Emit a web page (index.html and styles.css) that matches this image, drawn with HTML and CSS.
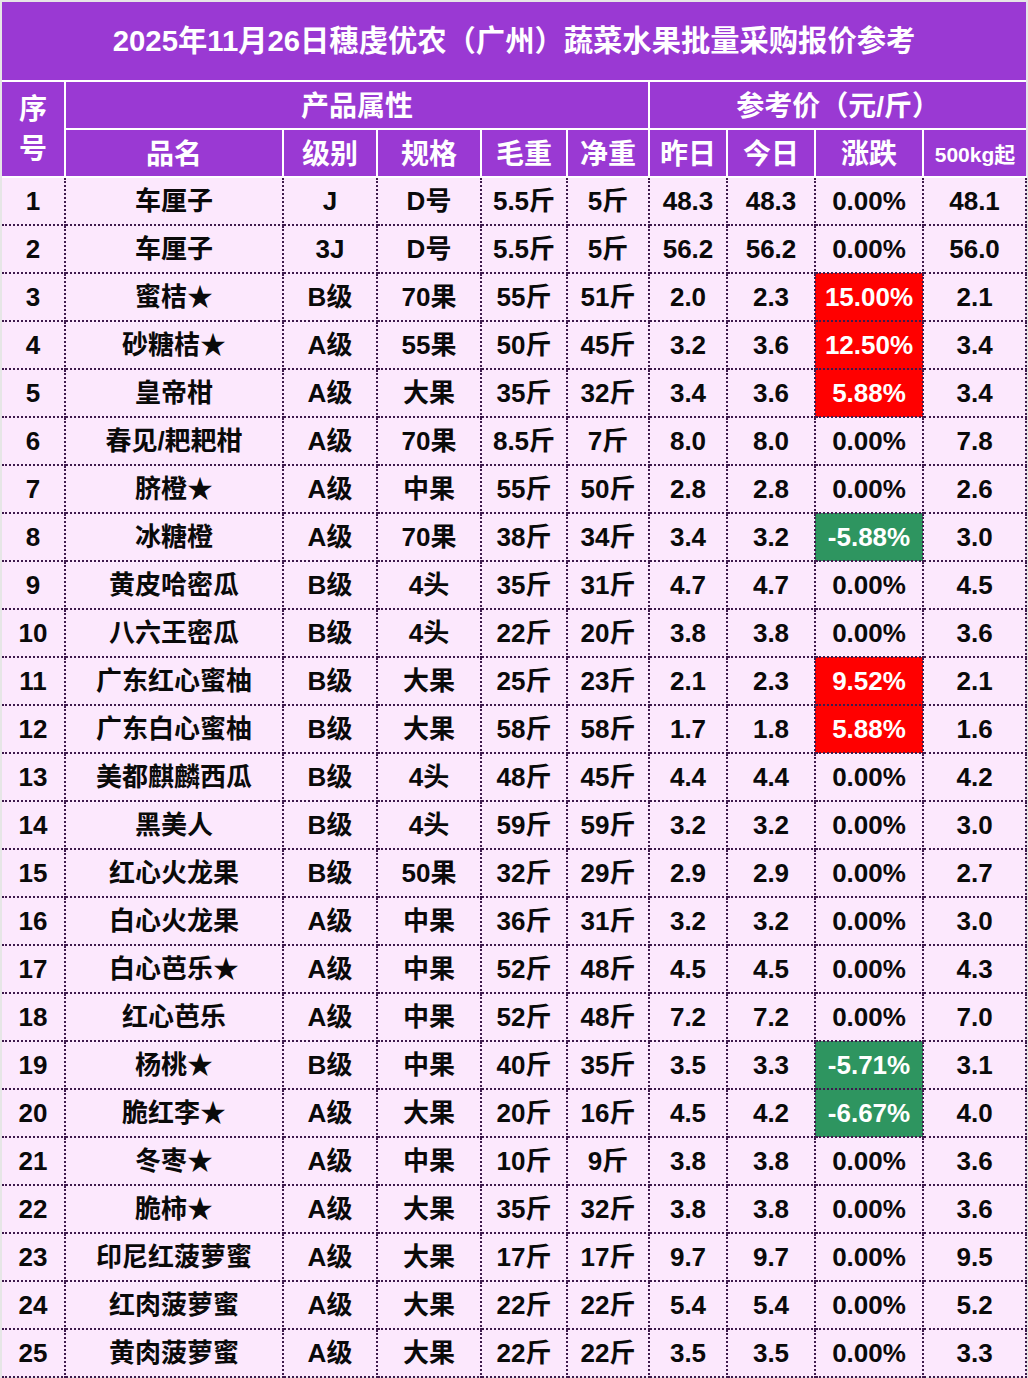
FILE: index.html
```html
<!DOCTYPE html>
<html lang="zh-CN">
<head>
<meta charset="utf-8">
<title>报价参考</title>
<link rel="stylesheet" href="styles.css">
</head>
<body>
<table class="sheet">
  <colgroup>
    <col class="c-no"><col class="c-name"><col class="c-grade"><col class="c-spec"><col class="c-gross"><col class="c-net"><col class="c-yest"><col class="c-today"><col class="c-chg"><col class="c-bulk">
  </colgroup>
  <thead>
    <tr class="title-row"><th colspan="10">2025年11月26日穗虔优农（广州）蔬菜水果批量采购报价参考</th></tr>
    <tr class="head-row"><th rowspan="2" class="no-head">序<br>号</th><th colspan="5">产品属性</th><th colspan="4">参考价（元/斤）</th></tr>
    <tr class="head-row"><th>品名</th><th>级别</th><th>规格</th><th>毛重</th><th>净重</th><th>昨日</th><th>今日</th><th>涨跌</th><th class="small">500kg起</th></tr>
  </thead>
  <tbody>
    <tr><td>1</td><td>车厘子</td><td>J</td><td>D号</td><td>5.5斤</td><td>5斤</td><td>48.3</td><td>48.3</td><td>0.00%</td><td>48.1</td></tr>
    <tr><td>2</td><td>车厘子</td><td>3J</td><td>D号</td><td>5.5斤</td><td>5斤</td><td>56.2</td><td>56.2</td><td>0.00%</td><td>56.0</td></tr>
    <tr><td>3</td><td>蜜桔★</td><td>B级</td><td>70果</td><td>55斤</td><td>51斤</td><td>2.0</td><td>2.3</td><td class="up">15.00%</td><td>2.1</td></tr>
    <tr><td>4</td><td>砂糖桔★</td><td>A级</td><td>55果</td><td>50斤</td><td>45斤</td><td>3.2</td><td>3.6</td><td class="up">12.50%</td><td>3.4</td></tr>
    <tr><td>5</td><td>皇帝柑</td><td>A级</td><td>大果</td><td>35斤</td><td>32斤</td><td>3.4</td><td>3.6</td><td class="up">5.88%</td><td>3.4</td></tr>
    <tr><td>6</td><td>春见/耙耙柑</td><td>A级</td><td>70果</td><td>8.5斤</td><td>7斤</td><td>8.0</td><td>8.0</td><td>0.00%</td><td>7.8</td></tr>
    <tr><td>7</td><td>脐橙★</td><td>A级</td><td>中果</td><td>55斤</td><td>50斤</td><td>2.8</td><td>2.8</td><td>0.00%</td><td>2.6</td></tr>
    <tr><td>8</td><td>冰糖橙</td><td>A级</td><td>70果</td><td>38斤</td><td>34斤</td><td>3.4</td><td>3.2</td><td class="down">-5.88%</td><td>3.0</td></tr>
    <tr><td>9</td><td>黄皮哈密瓜</td><td>B级</td><td>4头</td><td>35斤</td><td>31斤</td><td>4.7</td><td>4.7</td><td>0.00%</td><td>4.5</td></tr>
    <tr><td>10</td><td>八六王密瓜</td><td>B级</td><td>4头</td><td>22斤</td><td>20斤</td><td>3.8</td><td>3.8</td><td>0.00%</td><td>3.6</td></tr>
    <tr><td>11</td><td>广东红心蜜柚</td><td>B级</td><td>大果</td><td>25斤</td><td>23斤</td><td>2.1</td><td>2.3</td><td class="up">9.52%</td><td>2.1</td></tr>
    <tr><td>12</td><td>广东白心蜜柚</td><td>B级</td><td>大果</td><td>58斤</td><td>58斤</td><td>1.7</td><td>1.8</td><td class="up">5.88%</td><td>1.6</td></tr>
    <tr><td>13</td><td>美都麒麟西瓜</td><td>B级</td><td>4头</td><td>48斤</td><td>45斤</td><td>4.4</td><td>4.4</td><td>0.00%</td><td>4.2</td></tr>
    <tr><td>14</td><td>黑美人</td><td>B级</td><td>4头</td><td>59斤</td><td>59斤</td><td>3.2</td><td>3.2</td><td>0.00%</td><td>3.0</td></tr>
    <tr><td>15</td><td>红心火龙果</td><td>B级</td><td>50果</td><td>32斤</td><td>29斤</td><td>2.9</td><td>2.9</td><td>0.00%</td><td>2.7</td></tr>
    <tr><td>16</td><td>白心火龙果</td><td>A级</td><td>中果</td><td>36斤</td><td>31斤</td><td>3.2</td><td>3.2</td><td>0.00%</td><td>3.0</td></tr>
    <tr><td>17</td><td>白心芭乐★</td><td>A级</td><td>中果</td><td>52斤</td><td>48斤</td><td>4.5</td><td>4.5</td><td>0.00%</td><td>4.3</td></tr>
    <tr><td>18</td><td>红心芭乐</td><td>A级</td><td>中果</td><td>52斤</td><td>48斤</td><td>7.2</td><td>7.2</td><td>0.00%</td><td>7.0</td></tr>
    <tr><td>19</td><td>杨桃★</td><td>B级</td><td>中果</td><td>40斤</td><td>35斤</td><td>3.5</td><td>3.3</td><td class="down">-5.71%</td><td>3.1</td></tr>
    <tr><td>20</td><td>脆红李★</td><td>A级</td><td>大果</td><td>20斤</td><td>16斤</td><td>4.5</td><td>4.2</td><td class="down">-6.67%</td><td>4.0</td></tr>
    <tr><td>21</td><td>冬枣★</td><td>A级</td><td>中果</td><td>10斤</td><td>9斤</td><td>3.8</td><td>3.8</td><td>0.00%</td><td>3.6</td></tr>
    <tr><td>22</td><td>脆柿★</td><td>A级</td><td>大果</td><td>35斤</td><td>32斤</td><td>3.8</td><td>3.8</td><td>0.00%</td><td>3.6</td></tr>
    <tr><td>23</td><td>印尼红菠萝蜜</td><td>A级</td><td>大果</td><td>17斤</td><td>17斤</td><td>9.7</td><td>9.7</td><td>0.00%</td><td>9.5</td></tr>
    <tr><td>24</td><td>红肉菠萝蜜</td><td>A级</td><td>大果</td><td>22斤</td><td>22斤</td><td>5.4</td><td>5.4</td><td>0.00%</td><td>5.2</td></tr>
    <tr><td>25</td><td>黄肉菠萝蜜</td><td>A级</td><td>大果</td><td>22斤</td><td>22斤</td><td>3.5</td><td>3.5</td><td>0.00%</td><td>3.3</td></tr>
  </tbody>
</table>
</body>
</html>
```
FILE: styles.css
```css
html, body {
  margin: 0;
  padding: 0;
  background: #e6e6e6;
}
body {
  padding: 2px 0 0 2px;
  font-family: "Liberation Sans", "Noto Sans CJK SC", sans-serif;
  font-weight: bold;
}
.sheet {
  width: 1024px;
  table-layout: fixed;
  border-collapse: collapse;
  border-spacing: 0;
}
.c-no { width: 63px; }
.c-name { width: 218px; }
.c-grade { width: 94px; }
.c-spec { width: 104px; }
.c-gross { width: 86px; }
.c-net { width: 82px; }
.c-yest { width: 78px; }
.c-today { width: 88px; }
.c-chg { width: 108px; }
.c-bulk { width: 103px; }

th {
  background: #9a39d3;
  color: #ffffff;
  padding: 0;
  text-align: center;
  white-space: nowrap;
  border: 2px solid #ffffff;
  font-weight: bold;
}
.title-row th {
  height: 78px;
  font-size: 29.3px;
  line-height: 34px;
  border-top: none;
  border-left: none;
  border-right: none;
}
.head-row th {
  height: 43px;
  font-size: 28px;
  line-height: 32px;
  padding-top: 3px;
}
.head-row th:first-child { border-left: none; }
.head-row th:last-child { border-right: none; }
.head-row th.no-head { line-height: 40px; padding-top: 2px; }
.head-row th.small { font-size: 21px; }

td {
  background: #fce8fd;
  color: #0a0a0a;
  height: 46px;
  padding: 0;
  text-align: center;
  white-space: nowrap;
  font-size: 26px;
  line-height: 30px;
  border: 2px dotted #3e1a4c;
}
td:first-child { border-left: none; }
td.up { background: #ff0000; color: #ffffff; }
td.down { background: #2e9560; color: #ffffff; }
```
